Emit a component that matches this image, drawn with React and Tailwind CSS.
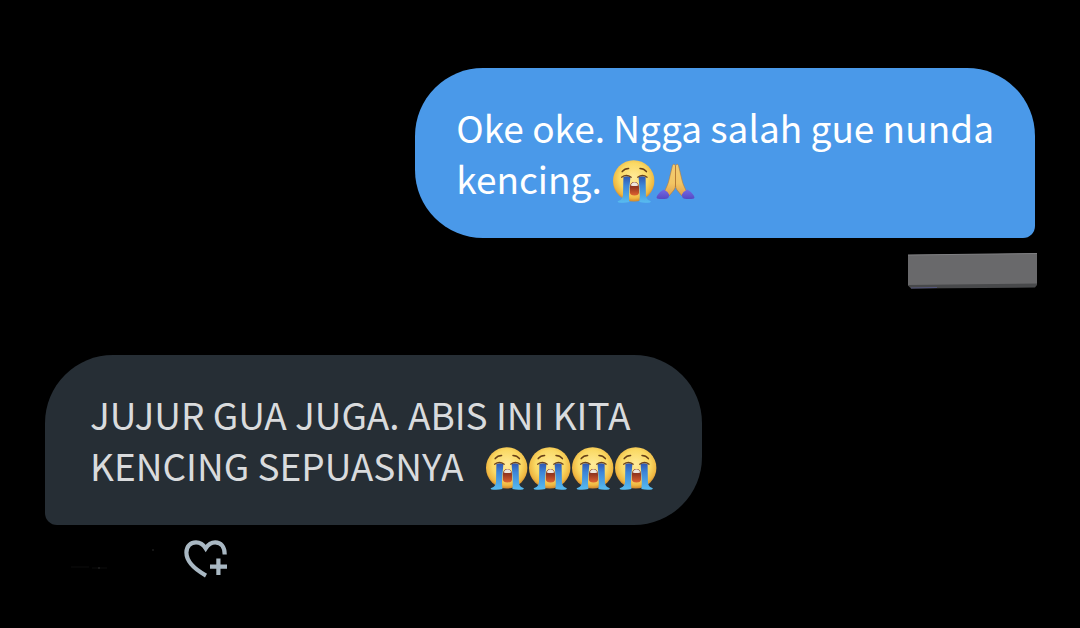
import { useId } from "react";

function CryingFace() {
  const id = useId();
  const face = `${id}face`;
  const tear = `${id}tear`;
  const mouth = `${id}mouth`;
  return (
    <svg role="img" aria-label="Loudly crying face" viewBox="0 0 43 44" className="h-11 w-[43px] shrink-0">
      <defs>
        <radialGradient id={face} cx="0.5" cy="0.42" r="0.58">
          <stop offset="0" stopColor="#ffeb9a" />
          <stop offset="0.6" stopColor="#fad964" />
          <stop offset="0.86" stopColor="#efb741" />
          <stop offset="1" stopColor="#cf842c" />
        </radialGradient>
        <linearGradient id={tear} x1="0" y1="0" x2="0" y2="1">
          <stop offset="0" stopColor="#2f56b0" />
          <stop offset="0.35" stopColor="#3d86d8" />
          <stop offset="1" stopColor="#58bcf0" />
        </linearGradient>
        <linearGradient id={mouth} x1="0" y1="0" x2="0" y2="1">
          <stop offset="0" stopColor="#6e2a1c" />
          <stop offset="0.45" stopColor="#9c3a20" />
          <stop offset="1" stopColor="#de6230" />
        </linearGradient>
      </defs>
      <circle cx="21.7" cy="20.9" r="20.7" fill={`url(#${face})`} />
      <path d="M11.4 17Q15 15.4 18.4 17L17.4 28Q16.6 36 17.4 42Q12 43.4 6.5 42.4Q4.4 41.4 7.4 40.6Q10.6 39.4 11 35Z" fill={`url(#${tear})`} />
      <path d="M33.6 17Q30 15.4 26.6 17L27.4 28Q28.2 36 27.4 42Q32.6 43.4 38 42.4Q40 41.4 37.2 40.6Q34.2 39.4 33.9 35Z" fill={`url(#${tear})`} />
      <path d="M9.6 17.2Q14.4 13.6 19.2 17.2M25.7 17.2Q30.6 13.6 35.1 17.2" fill="none" stroke="#6b4320" strokeWidth="1.3" strokeLinecap="round" />
      <path d="M10.2 11.6Q12.6 8.7 16.6 8.6M28 8.6Q32 8.7 34.4 11.6" fill="none" stroke="#684018" strokeWidth="1.5" strokeLinecap="round" />
      <path d="M17.9 27.4C17.9 24 19.6 22 22.4 22S27 24 27 27.4V32.4Q27 35.4 22.5 35.4T17.9 32.4Z" fill={`url(#${mouth})`} />
      <path d="M18.7 25.4C19.5 23.1 20.9 22.3 22.4 22.3S25.5 23.1 26.3 25.4Q22.5 26.6 18.7 25.4Z" fill="#eee6dc" />
    </svg>
  );
}

function FoldedHands() {
  const id = useId();
  const skin = `${id}skin`;
  const sleeve = `${id}sleeve`;
  return (
    <svg role="img" aria-label="Folded hands" viewBox="0 0 42 44" className="h-11 w-[42px] shrink-0">
      <defs>
        <linearGradient id={skin} x1="0" y1="0" x2="0" y2="1">
          <stop offset="0" stopColor="#f3cc72" />
          <stop offset="0.6" stopColor="#f2c564" />
          <stop offset="1" stopColor="#dfa04c" />
        </linearGradient>
        <linearGradient id={sleeve} x1="0" y1="0" x2="0" y2="1">
          <stop offset="0" stopColor="#7468e4" />
          <stop offset="1" stopColor="#5549c3" />
        </linearGradient>
      </defs>
      <path d="M20.5 6Q20 4 18.6 4.2Q17.3 4.6 16.9 8L14 20Q13.2 23.5 12 26L9.5 31.5L14 36L19 30Q20.5 28 20.5 25Z" fill={`url(#${skin})`} stroke="#b67a35" strokeWidth="0.6" />
      <path d="M20.5 6Q21 4 22.4 4.2Q23.7 4.6 24.1 8L27 20Q27.8 23.5 29 26L31.5 31.5L27 36L22 30Q20.5 28 20.5 25Z" fill={`url(#${skin})`} stroke="#b67a35" strokeWidth="0.6" />
      <path d="M20.5 6V27" stroke="#b67a35" strokeWidth="0.9" />
      <path d="M8.8 29.4Q13 31.4 14.4 35Q13.9 38.2 11.5 38.8Q6 39.6 2 38.4Q0.8 37.5 2.4 35.2Q5 31.2 8.8 29.4Z" fill={`url(#${sleeve})`} />
      <path d="M32.2 29.4Q28 31.4 26.6 35Q27.1 38.2 29.5 38.8Q35 39.6 39 38.4Q40.2 37.5 38.6 35.2Q36 31.2 32.2 29.4Z" fill={`url(#${sleeve})`} />
    </svg>
  );
}

function HeartPlus() {
  return (
    <svg aria-hidden="true" viewBox="0 0 44 40" className="h-10 w-11" fill="none" stroke="#a9b8c3" strokeWidth="4.2">
      <path d="M22 36.6C9 29.4 2.4 21.5 2.4 13.6C2.4 7 6.8 3.4 12 3.4C16.2 3.4 19.2 5.4 21.7 9.4C24.2 5.4 27.2 3.4 31.2 3.4C36.6 3.4 40.7 7.4 40.7 15.5" />
      <path d="M34.4 19.4V36M26 27.7H43" />
    </svg>
  );
}

function HiddenStatus() {
  return (
    <svg aria-hidden="true" viewBox="0 0 130 36" className="-mr-0.5 mt-[15px] h-9 w-[130px] self-end">
      <path d="M1 2L130 0.5V32L128 34.5L4 35.5L1 32.5Z" fill="#48494b" />
      <path d="M1 2L130 0.5V30.5L1 32Z" fill="#69696b" />
      <path d="M1 2L130 0.5" stroke="#808083" />
      <path d="M4 35L30 34.5" stroke="#55577f" />
    </svg>
  );
}

function FaintMarks() {
  return (
    <svg aria-hidden="true" viewBox="0 0 139 40" className="h-10 w-[139px]" fill="none" stroke="#0d0d0d">
      <path d="M26 28H44M47 29H62" />
      <path d="M53 29H55M107 11H109" stroke="#2a2a2a" />
    </svg>
  );
}

export default function App() {
  return (
    <main className="flex min-h-screen flex-col bg-black px-[45px] pt-[68px] pb-12 font-['Noto_Sans_CJK_SC',sans-serif] text-[37px] leading-[51px]">
      <section className="flex flex-col" aria-label="Sent message">
        <div className="max-w-full self-end rounded-[68px] rounded-br-xl bg-[#4a99e9] px-[41px] py-[34px] text-white">
          <p>Oke oke. Ngga salah gue nunda</p>
          <p className="flex items-end gap-2.5">
            kencing.
            <span className="flex">
              <CryingFace />
              <FoldedHands />
            </span>
          </p>
        </div>
        <HiddenStatus />
      </section>
      <section className="mt-[66px] flex flex-col" aria-label="Received message">
        <div className="min-w-[657px] max-w-full self-start rounded-[68px] rounded-bl-xl bg-[#262e35] px-[45px] py-[34px] text-[#d9dbdd]">
          <p>JUJUR GUA JUGA. ABIS INI KITA</p>
          <p className="flex items-end justify-between gap-2.5">
            KENCING SEPUASNYA
            <span className="flex">
              <CryingFace />
              <CryingFace />
              <CryingFace />
              <CryingFace />
            </span>
          </p>
        </div>
        <div className="mt-3.5 flex">
          <FaintMarks />
          <button type="button" aria-label="Add reaction">
            <HeartPlus />
          </button>
        </div>
      </section>
    </main>
  );
}
